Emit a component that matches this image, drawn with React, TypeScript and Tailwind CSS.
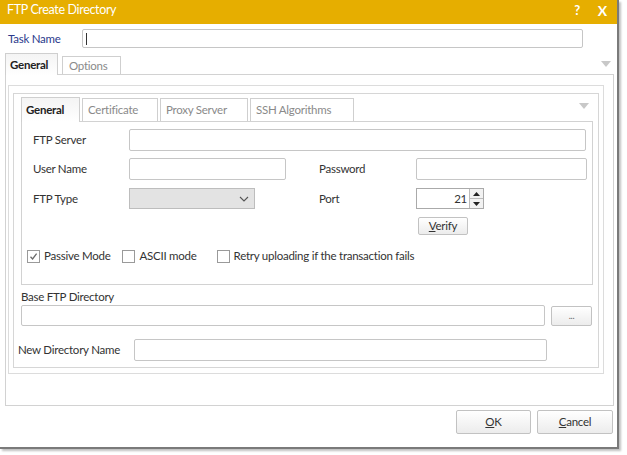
import React from "react";

const Input: React.FC<{ className?: string }> = ({ className = "" }) => (
  <div className={`border border-[#c6c6c6] rounded-[2px] bg-white ${className}`} />
);

const Check: React.FC<{ checked?: boolean }> = ({ checked }) => (
  <div className="w-[13px] h-[13px] border border-[#9a9a9a] bg-white flex items-center justify-center">
    {checked && (
      <svg width="9" height="9" viewBox="0 0 9 9">
        <path d="M1.5 4.8 L3.6 7 L7.6 1.6" stroke="#6a6a6a" strokeWidth="1.3" fill="none" />
      </svg>
    )}
  </div>
);

const Btn: React.FC<{ className?: string; children: React.ReactNode }> = ({ className = "", children }) => (
  <div
    className={`flex items-center justify-center border border-[#c2c2c2] rounded-[2px] bg-gradient-to-b from-white to-[#ececec] text-[#333] ${className}`}
  >
    {children}
  </div>
);

const TabArrow = () => (
  <svg width="10" height="6" viewBox="0 0 10 6">
    <path d="M0 0 L10 0 L5 6 Z" fill="#c8c8c8" />
  </svg>
);

export default function App() {
  return (
    <div className="w-[627px] h-[455px] bg-white font-['Lato','Liberation_Sans',sans-serif] text-[11.5px] tracking-[-0.25px] text-[#333]">
      <div className="w-[619px] h-[449px] flex flex-col bg-white border-r-[2px] border-b-[2px] border-[#7a7a7a] shadow-[2px_2px_2px_rgba(0,0,0,0.25)]">
        {/* title bar */}
        <div className="h-[24px] shrink-0 bg-[#e6ae00] flex items-center justify-between pl-[7px] pr-[10px] pb-[3px] text-white">
          <span className="text-[12.5px] tracking-[-0.35px]">FTP Create Directory</span>
          <div className="flex items-center gap-[18px] font-bold">
            <span className="text-[13px]">?</span>
            <span className="text-[14px]">X</span>
          </div>
        </div>

        {/* task name */}
        <div className="mt-[5px] h-[19px] flex items-center">
          <span className="w-[82px] pl-[8px] text-[#2b3a8c]">Task Name</span>
          <div className="w-[501px] h-[19px] border border-[#c6c6c6] rounded-[2px] flex items-center pl-[3px]">
            <div className="w-px h-[12px] bg-[#333]" />
          </div>
        </div>

        {/* outer tabs */}
        <div className="mt-[5px] h-[21px] ml-[5px] w-[608px] flex items-end relative">
          <div className="h-[22px] w-[53px] -mb-px z-10 border border-b-0 border-[#cfcfcf] bg-gradient-to-b from-[#f4f4f4] to-white flex items-center pl-[4px] font-bold text-[#222]">
            General
          </div>
          <div className="h-[18px] w-[59px] ml-[4px] border border-b-0 border-[#cfcfcf] bg-white flex items-center pl-[6px] text-[#8a8a8a]">
            Options
          </div>
          <div className="ml-auto mr-[2px] mb-[7px]">
            <TabArrow />
          </div>
        </div>

        {/* outer panel */}
        <div className="ml-[5px] w-[609px] h-[332px] border border-[#d2d2d2] pl-[2px] pt-[10px]">
          <div className="w-[596px] h-[289px] border border-[#dcdcdc] p-[4px] pt-[7px]">
            <div className="w-[586px] h-[275px] border border-[#d6d6d6] flex flex-col">
              {/* inner tabs */}
              <div className="mt-[2px] ml-[7px] w-[572px] h-[25px] flex items-end">
                <div className="h-[25px] w-[59px] -mb-px z-10 border border-b-0 border-[#cfcfcf] bg-gradient-to-b from-[#f4f4f4] to-white flex items-center pl-[4px] font-bold text-[#222]">
                  General
                </div>
                <div className="h-[23px] w-[76px] ml-[2px] border border-b-0 border-[#cfcfcf] flex items-center pl-[5px] text-[#8a8a8a]">
                  Certificate
                </div>
                <div className="h-[23px] w-[88px] ml-[2px] border border-b-0 border-[#cfcfcf] flex items-center pl-[5px] text-[#8a8a8a]">
                  Proxy Server
                </div>
                <div className="h-[23px] w-[104px] ml-[2px] border border-b-0 border-[#cfcfcf] flex items-center pl-[5px] text-[#8a8a8a]">
                  SSH Algorithms
                </div>
                <div className="ml-auto mr-[4px] mb-[12px]">
                  <TabArrow />
                </div>
              </div>
              <div className="ml-[7px] w-[572px] h-[164px] border border-[#d2d2d2] flex flex-col">
                {/* FTP server */}
                <div className="mt-[7px] h-[22px] flex items-center">
                  <span className="w-[107px] pl-[11px]">FTP Server</span>
                  <Input className="w-[457px] h-[22px]" />
                </div>
                {/* user / password */}
                <div className="mt-[7px] h-[22px] flex items-center">
                  <span className="w-[107px] pl-[11px]">User Name</span>
                  <Input className="w-[157px] h-[22px]" />
                  <span className="w-[130px] pl-[33px]">Password</span>
                  <Input className="w-[171px] h-[22px]" />
                </div>
                {/* ftp type / port */}
                <div className="mt-[8px] h-[21px] flex items-center">
                  <span className="w-[107px] pl-[11px]">FTP Type</span>
                  <div className="w-[126px] h-[21px] border border-[#bdbdbd] bg-[#e3e3e3] flex items-center justify-end pr-[5px]">
                    <svg width="10" height="6" viewBox="0 0 10 6">
                      <path d="M1 1 L5 5 L9 1" stroke="#555" strokeWidth="1.1" fill="none" />
                    </svg>
                  </div>
                  <span className="w-[161px] pl-[64px]">Port</span>
                  <div className="w-[68px] h-[21px] border border-[#aaa] bg-white flex items-center justify-end">
                    <span className="mr-[2px]">21</span>
                    <div className="w-[14px] h-[19px] flex flex-col border-l border-[#bbb]">
                      <div className="flex-1 flex items-center justify-center bg-[#f2f2f2] border-b border-[#bbb]">
                        <svg width="7" height="4" viewBox="0 0 7 4">
                          <path d="M0 4 L3.5 0 L7 4 Z" fill="#222" />
                        </svg>
                      </div>
                      <div className="flex-1 flex items-center justify-center bg-[#f2f2f2]">
                        <svg width="7" height="4" viewBox="0 0 7 4">
                          <path d="M0 0 L3.5 4 L7 0 Z" fill="#222" />
                        </svg>
                      </div>
                    </div>
                  </div>
                </div>
                {/* verify */}
                <div className="mt-[8px] h-[18px] flex">
                  <Btn className="ml-[396px] w-[50px] h-[18px]">
                    <span>
                      <span className="underline">V</span>erify
                    </span>
                  </Btn>
                </div>
                {/* checkboxes */}
                <div className="mt-[13px] h-[16px] flex items-center ml-[5px]">
                  <Check checked />
                  <span className="ml-[4px]">Passive Mode</span>
                  <div className="ml-[12px]">
                    <Check />
                  </div>
                  <span className="ml-[4px]">ASCII mode</span>
                  <div className="ml-[20px]">
                    <Check />
                  </div>
                  <span className="ml-[4px]">Retry uploading if the transaction fails</span>
                </div>
              </div>

              {/* base dir */}
              <div className="ml-[7px] mt-[5px] h-[14px] flex items-center">Base FTP Directory</div>
              <div className="ml-[7px] mt-[1px] h-[21px] flex items-center">
                <Input className="w-[524px] h-[21px]" />
                <Btn className="ml-[6px] w-[41px] h-[20px] text-[9px] text-[#666]">...</Btn>
              </div>

              {/* new dir */}
              <div className="mt-[13px] h-[22px] flex items-center">
                <span className="w-[120px] pl-[4px]">New Directory Name</span>
                <Input className="w-[413px] h-[22px]" />
              </div>
            </div>
          </div>
        </div>

        {/* footer */}
        <div className="mt-[4px] flex justify-end pr-[4px] gap-[6px]">
          <Btn className="w-[75px] h-[24px]">
            <span>
              <span className="underline">O</span>K
            </span>
          </Btn>
          <Btn className="w-[76px] h-[24px]">
            <span>
              <span className="underline">C</span>ancel
            </span>
          </Btn>
        </div>
      </div>
    </div>
  );
}
